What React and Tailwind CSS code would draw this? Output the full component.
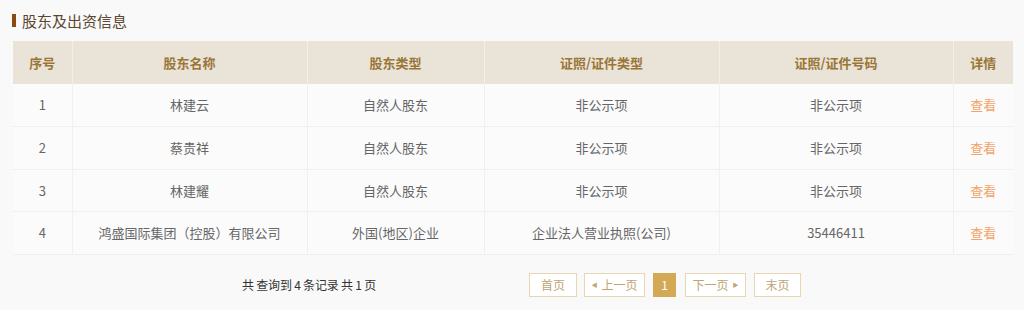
import React from 'react';

const rows = [
    { no: 1, name: '林建云', type: '自然人股东', certType: '非公示项', certNo: '非公示项' },
    { no: 2, name: '蔡贵祥', type: '自然人股东', certType: '非公示项', certNo: '非公示项' },
    { no: 3, name: '林建耀', type: '自然人股东', certType: '非公示项', certNo: '非公示项' },
    { no: 4, name: '鸿盛国际集团（控股）有限公司', type: '外国(地区)企业', certType: '企业法人营业执照(公司)', certNo: '35446411' },
];

const cols = ['w-[59px]', 'w-[235px]', 'w-[177px]', 'w-[235px]', 'w-[234px]', 'w-[60px]'];

export default function App() {
    return (
        <div className="w-[1024px] h-[310px] bg-[#f9f9fa] overflow-hidden font-['Microsoft_YaHei','Noto_Sans_CJK_SC',sans-serif]">
            <div className="flex items-center h-[41px] pl-[12px] pb-[1px]">
                <span className="w-[4px] h-[13px] bg-[#8b4a12] mr-[6px]" />
                <span className="text-[15px] text-[#5c4630] leading-none">股东及出资信息</span>
            </div>

            <table className="ml-[13px] w-[1000px] border-collapse table-fixed text-[13px]">
                <thead>
                    <tr className="h-[43px] bg-[#e9e3d8] text-[#9a7636] font-bold">
                        {['序号', '股东名称', '股东类型', '证照/证件类型', '证照/证件号码', '详情'].map((h, i) => (
                            <th key={h} className={`${cols[i]} border-r border-[#f3efe8] last:border-r-0 font-bold`}>{h}</th>
                        ))}
                    </tr>
                </thead>
                <tbody className="text-[#666]">
                    {rows.map((r) => (
                        <tr key={r.no} className="h-[42.5px] bg-[#fbfbfc] border-b border-[#efefef]">
                            <td className="text-center border-r border-[#f0f0f0]">{r.no}</td>
                            <td className="text-center border-r border-[#f0f0f0]">{r.name}</td>
                            <td className="text-center border-r border-[#f0f0f0]">{r.type}</td>
                            <td className="text-center border-r border-[#f0f0f0]">{r.certType}</td>
                            <td className="text-center border-r border-[#f0f0f0]">{r.certNo}</td>
                            <td className="text-center text-[#f3a468]">查看</td>
                        </tr>
                    ))}
                </tbody>
            </table>

            <div className="flex items-center h-[56px] pt-[4px]">
                <div className="w-[529px] pl-[242px] text-[12px] text-[#333] tracking-[-0.2px]">共 查询到 4 条记录 共 1 页</div>
                <div className="flex items-center gap-[7px] text-[12px] text-[#c0a475]">
                    <button className="w-[48px] h-[24px] border border-[#e8d6b3] bg-white">首页</button>
                    <button className="w-[61px] h-[24px] border border-[#e8d6b3] bg-white flex items-center justify-center gap-[4px]">
                        <span className="text-[6px] leading-none">◀</span>上一页
                    </button>
                    <button className="w-[23px] h-[24px] bg-[#d3a956] text-white ml-[1px] mr-[2px]">1</button>
                    <button className="w-[61px] h-[24px] border border-[#e8d6b3] bg-white flex items-center justify-center gap-[4px]">
                        下一页<span className="text-[6px] leading-none">▶</span>
                    </button>
                    <button className="w-[47px] h-[24px] border border-[#e8d6b3] bg-white ml-[1px]">末页</button>
                </div>
            </div>
        </div>
    );
}
